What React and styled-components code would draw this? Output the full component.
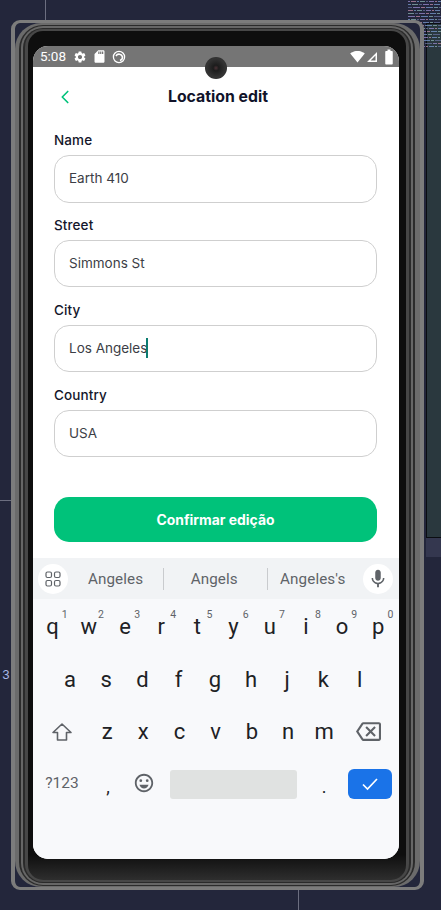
import React from "react";
import styled, { createGlobalStyle } from "styled-components";
import {
  MdSettings,
  MdSdCard,
  MdSignalWifi4Bar,
  MdBatteryFull,
  MdMic,
  MdOutlineBackspace,
  MdOutlineEmojiEmotions,
} from "react-icons/md";
import { LuChevronLeft } from "react-icons/lu";

const Global = createGlobalStyle`
  html, body { margin: 0; padding: 0; background: #23263b; }
  body { width: 441px; height: 910px; overflow: hidden; font-family: Inter, "Liberation Sans", sans-serif; }
  * { box-sizing: border-box; }
`;

const Page = styled.div`
  position: relative;
  width: 441px;
  height: 910px;
  padding: 20px 17px 20px 11px;
  background: #23263b;
  overflow: hidden;
`;

const DecorLine = styled.div`
  position: absolute;
  left: ${(p) => p.$x}px;
  top: ${(p) => p.$y}px;
  width: ${(p) => p.$w}px;
  height: ${(p) => p.$h}px;
  background: #6c6e80;
`;

const SidePanel = styled.div`
  position: absolute;
  left: 426px;
  top: 23px;
  width: 15px;
  height: 515px;
  background: #2a383e;
  border-left: 1px solid #0b0d12;
  border-top: 1px solid #0b0d12;
  border-bottom: 1px solid #0b0d12;
`;

const SideStrip = styled.div`
  position: absolute;
  left: 426px;
  top: 538px;
  width: 15px;
  height: 19px;
  background: #34374f;
`;

const LineNo = styled.span`
  position: absolute;
  left: 2px;
  top: 668px;
  font: 400 13px/16px "Liberation Mono", monospace;
  color: #a9b8e8;
`;

const CodeThumb = styled.svg`
  position: absolute;
  left: 400px;
  top: 0;
`;

const Frame = styled.div`
  position: relative;
  width: 413px;
  height: 870px;
  border-style: solid;
  border-color: #7c7c7c;
  border-width: 3px 4px;
  border-radius: 9px;
`;

const Shell = styled.div`
  height: 100%;
  padding: 2px 5px 1px 4px;
  border-radius: 26px;
  background: #6b6b6b;
`;

const Ring = styled.div`
  height: 100%;
  padding: ${(p) => p.$pad};
  border-radius: ${(p) => p.$radius}px;
  background: ${(p) => p.$color};
`;

const Bezel = styled.div`
  height: 100%;
  padding: 15px 7px 21px 5px;
  border-radius: 15px;
  background: linear-gradient(#0e0e0e 0, #0e0e0e 97%, #2e2e2e 100%);
`;

const Screen = styled.div`
  position: relative;
  width: 366px;
  height: 813px;
  border-radius: 15px;
  overflow: hidden;
  background: #fff;
  display: flex;
  flex-direction: column;
`;

const StatusBar = styled.div`
  height: 21px;
  flex: none;
  background: #757575;
  color: #fff;
  display: flex;
  align-items: center;
  padding: 0 1px 0 7px;
  font: 400 13.5px/21px Roboto, sans-serif;
`;

const StatusIcons = styled.div`
  display: flex;
  align-items: center;
  gap: 5px;
  margin-left: 7px;
`;

const StatusRight = styled.div`
  margin-left: auto;
  display: flex;
  align-items: center;
  gap: 1px;
`;

const Camera = styled.div`
  position: absolute;
  left: 172px;
  top: 11px;
  width: 22px;
  height: 22px;
  border-radius: 50%;
  background: radial-gradient(circle at 50% 50%, #4a3236 0, #1c1c1c 18%, #333 60%, #2a2a2a 100%);
`;

const Header = styled.div`
  height: 60px;
  flex: none;
  display: flex;
  align-items: center;
  position: relative;
  justify-content: center;
  padding: 0 0 0 4px;
`;

const BackBtn = styled.div`
  position: absolute;
  left: 21px;
  top: 19px;
  width: 24px;
  height: 24px;
  color: #00c27a;
  display: flex;
`;

const Title = styled.h1`
  margin: 0;
  font: 700 15.8px/20px Inter, sans-serif;
  color: #11132a;
`;

const Form = styled.div`
  padding: 5px 22px 0 21px;
  display: flex;
  flex-direction: column;
  gap: 14.4px;
`;

const Field = styled.div`
  display: flex;
  flex-direction: column;
  gap: 6px;
`;

const Label = styled.div`
  font: 500 13.5px/17px Inter, sans-serif;
  color: #14162b;
  letter-spacing: 0.1px;
`;

const InputBox = styled.div`
  height: 47.5px;
  border: 1px solid #cfcfcf;
  border-radius: 15px;
  padding: 0 14px 1px;
  display: flex;
  align-items: center;
  font: 400 13.5px/20px Inter, sans-serif;
  color: #3c3e46;
  background: #fff;
`;

const Caret = styled.span`
  display: inline-block;
  width: 1.5px;
  height: 20px;
  margin-left: -1px;
  background: #0c7c70;
`;

const Submit = styled.button`
  margin: 40px 22px 0 21px;
  height: 45px;
  flex: none;
  border: 0;
  border-radius: 15px;
  background: #00c27a;
  color: #fff;
  font: 700 13.9px/20px Inter, sans-serif;
`;

const Keyboard = styled.div`
  margin-top: 16px;
  flex: 1;
  background: #f8f9fb;
  display: flex;
  flex-direction: column;
`;

const Suggestions = styled.div`
  height: 41px;
  flex: none;
  background: #f1f3f5;
  display: grid;
  grid-template-columns: 30px 95fr 103.5fr 96.5fr 30px;
  align-items: center;
  padding: 0 6px 0 5px;
`;

const RoundBtn = styled.div`
  width: 30px;
  height: 30px;
  border-radius: 50%;
  background: #fff;
  color: #5f6368;
  display: flex;
  align-items: center;
  justify-content: center;
`;

const Suggestion = styled.div`
  height: 22px;
  display: flex;
  align-items: center;
  justify-content: center;
  padding-right: ${(p) => p.$nudge || 0}px;
  font: 400 15.2px/22px Roboto, sans-serif;
  color: #5f6368;
  letter-spacing: 0.1px;
  & + & {
    border-left: 1px solid #c9cbce;
  }
`;

const Rows = styled.div`
  padding-top: 2px;
`;

const Row = styled.div`
  height: 52.3px;
  display: grid;
  align-items: center;
  grid-template-columns: ${(p) => p.$cols};
  padding: ${(p) => p.$pad || "0"};
`;

const Key = styled.div`
  position: relative;
  text-align: center;
  font: 400 22px/28px Roboto, sans-serif;
  color: #202124;
`;

const Hint = styled.span`
  position: absolute;
  top: -4px;
  right: 3px;
  font: 400 10.5px/12px Roboto, sans-serif;
  color: #5f6368;
`;

const IconKey = styled.div`
  display: flex;
  align-items: center;
  justify-content: center;
  color: #5f6368;
`;

const SmallKey = styled.div`
  text-align: center;
  font: 400 15.5px/20px Roboto, sans-serif;
  color: #5f6368;
  margin-top: -3px;
`;

const Space = styled.div`
  height: 29px;
  margin-left: 8px;
  border-radius: 3px;
  background: #e0e2e1;
`;

const Enter = styled.div`
  height: 30px;
  border-radius: 6px;
  background: #1a73e8;
  color: #fff;
  display: flex;
  align-items: center;
  justify-content: center;
`;

const PuncKey = styled.div`
  text-align: center;
  font: 400 18px/24px Roboto, sans-serif;
  color: #202124;
  padding: 5px 0 0 ${(p) => p.$shift || 0}px;
`;

const EmojiKey = styled(IconKey)`
  margin-top: -3px;
`;

const fields = [
  ["Name", "Earth 410"],
  ["Street", "Simmons St"],
  ["City", "Los Angeles", true],
  ["Country", "USA"],
];

const row1 = "qwertyuiop".split("");
const row2 = "asdfghjkl".split("");
const row3 = "zxcvbnm".split("");

const palette = ["#9a8ad0", "#7a9ad0", "#6a72a0", "#c08aa8", "#8ab0b0"];
const codeBits = [];
for (let row = 0; row < 16; row++) {
  const y = 1 + row * 3;
  let x = row < 8 ? 8 : 20;
  let i = row;
  while (x < 41) {
    const w = 2 + ((i * 7) % 6);
    codeBits.push({ x, y, w, c: palette[i % palette.length] });
    x += w + 1;
    i += 3;
  }
}

export default function App() {
  return (
    <Page>
      <Global />
      <DecorLine $x={45} $y={0} $w={1} $h={20} />
      <DecorLine $x={298} $y={890} $w={1} $h={20} />
      <DecorLine $x={0} $y={500} $w={11} $h={1} />
      <SidePanel />
      <SideStrip />
      <LineNo>3</LineNo>
      <CodeThumb width="41" height="50" viewBox="0 0 41 50" aria-hidden="true">
        {codeBits.map((b, i) => (
          <rect key={i} x={b.x} y={b.y} width={b.w} height="1" fill={b.c} opacity="0.75" />
        ))}
      </CodeThumb>
      <Frame>
        <Shell>
          <Ring $pad="1px 2px" $radius={24} $color="#2b2b2b">
            <Ring $pad="2px 2px" $radius={22} $color="#666">
              <Ring $pad="1px 2px" $radius={20} $color="#2a2a2a">
                <Ring $pad="2px 3px" $radius={18} $color="#474747">
                  <Bezel>
                    <Screen>
                      <StatusBar>
                        <span>5:08</span>
                        <StatusIcons>
                          <MdSettings size={14} />
                          <MdSdCard size={15} />
                          <svg width="14" height="14" viewBox="0 0 14 14" fill="none" stroke="#fff">
                            <circle cx="7" cy="7" r="5.6" strokeWidth="1.3" />
                            <path d="M4 6 A3.5 3.5 0 0 1 10.5 7 A3.5 3.5 0 0 1 8 10.4" strokeWidth="1.6" />
                          </svg>
                        </StatusIcons>
                        <StatusRight>
                          <MdSignalWifi4Bar size={15} />
                          <svg width="12" height="12" viewBox="0 0 12 12">
                            <path d="M11 1 V11 H1 Z M9.5 4.6 L4.6 9.6 H9.5 Z" fill="#fff" fillRule="evenodd" />
                          </svg>
                          <MdBatteryFull size={18} style={{ marginLeft: 1 }} />
                        </StatusRight>
                      </StatusBar>
                      <Camera />
                      <Header>
                        <BackBtn>
                          <LuChevronLeft size={22} strokeWidth={1.8} />
                        </BackBtn>
                        <Title>Location edit</Title>
                      </Header>
                      <Form>
                        {fields.map(([label, value, caret]) => (
                          <Field key={label}>
                            <Label>{label}</Label>
                            <InputBox>
                              {value}
                              {caret && <Caret />}
                            </InputBox>
                          </Field>
                        ))}
                      </Form>
                      <Submit>Confirmar edição</Submit>
                      <Keyboard>
                        <Suggestions>
                          <RoundBtn>
                            <svg width="16" height="16" viewBox="0 0 16 16" fill="none" stroke="#5f6368" strokeWidth="1.2">
                              <rect x="1" y="1" width="5.5" height="5.5" rx="1.5" />
                              <rect x="9.5" y="1" width="5.5" height="5.5" rx="1.5" />
                              <rect x="1" y="9.5" width="5.5" height="5.5" rx="1.5" />
                              <rect x="9.5" y="9.5" width="5.5" height="5.5" rx="1.5" />
                            </svg>
                          </RoundBtn>
                          <Suggestion>Angeles</Suggestion>
                          <Suggestion $nudge={2}>Angels</Suggestion>
                          <Suggestion $nudge={5}>Angeles's</Suggestion>
                          <RoundBtn>
                            <MdMic size={22} />
                          </RoundBtn>
                        </Suggestions>
                        <Rows>
                          <Row $cols="repeat(10, 36.2px)" $pad="0 0 0 1.5px">
                            {row1.map((k, i) => (
                              <Key key={k}>
                                {k}
                                <Hint>{(i + 1) % 10}</Hint>
                              </Key>
                            ))}
                          </Row>
                          <Row $cols="repeat(9, 36.2px)" $pad="0 0 0 19px">
                            {row2.map((k) => (
                              <Key key={k}>{k}</Key>
                            ))}
                          </Row>
                          <Row $cols="55px repeat(7, 36.2px) 1fr" $pad="0 5px 0 1px">
                            <IconKey>
                              <svg width="22" height="22" viewBox="0 0 22 22" fill="none" stroke="#5f6368" strokeWidth="1.6" strokeLinejoin="round">
                                <path d="M11 3 L20 11.5 H15.5 V19 H6.5 V11.5 H2 Z" />
                              </svg>
                            </IconKey>
                            {row3.map((k) => (
                              <Key key={k}>{k}</Key>
                            ))}
                            <IconKey>
                              <MdOutlineBackspace size={25} />
                            </IconKey>
                          </Row>
                          <Row $cols="56px 36.2px 36.2px 135px 50.6px 44px" $pad="0 0 0 1px">
                            <SmallKey>?123</SmallKey>
                            <PuncKey>,</PuncKey>
                            <EmojiKey>
                              <MdOutlineEmojiEmotions size={22} />
                            </EmojiKey>
                            <Space />
                            <PuncKey $shift={3}>.</PuncKey>
                            <Enter>
                              <svg width="18" height="14" viewBox="0 0 18 14" fill="none" stroke="#fff" strokeWidth="1.7">
                                <path d="M2 7.5 L6.5 12 L16 2" />
                              </svg>
                            </Enter>
                          </Row>
                        </Rows>
                      </Keyboard>
                    </Screen>
                  </Bezel>
                </Ring>
              </Ring>
            </Ring>
          </Ring>
        </Shell>
      </Frame>
    </Page>
  );
}
